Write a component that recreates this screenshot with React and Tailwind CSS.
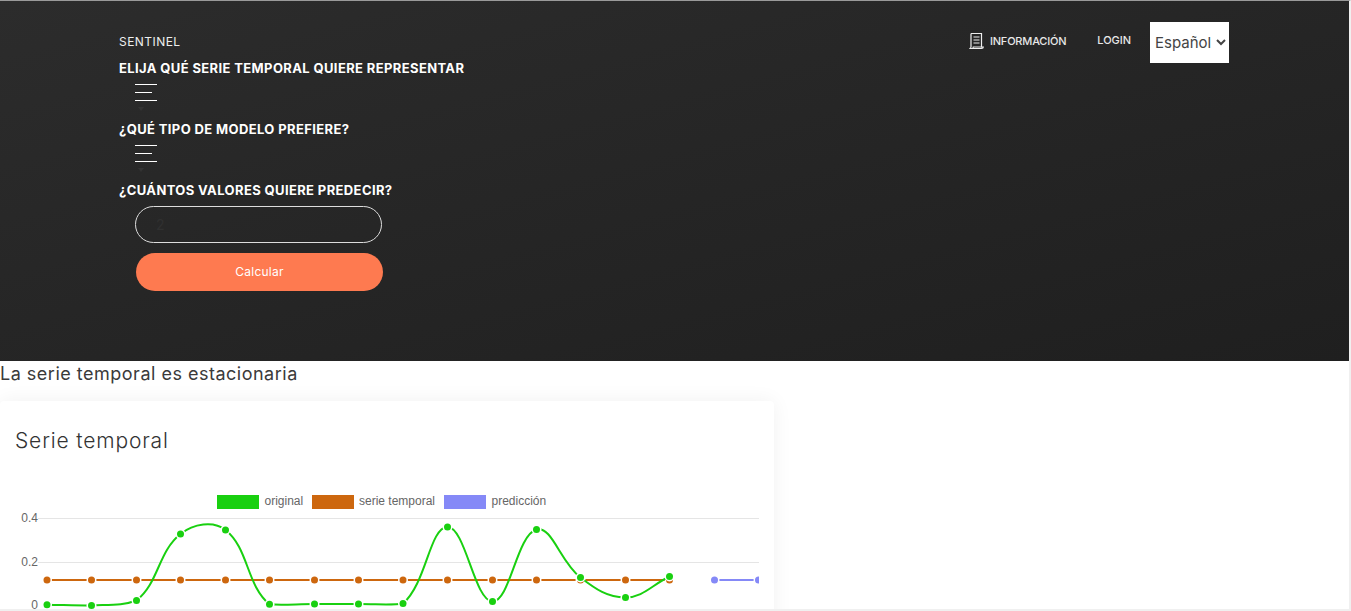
import React from "react";

const font = "[font-family:Inter,'Open_Sans',sans-serif]";

const xs = [47, 91.5, 136.5, 180.5, 225.5, 269.5, 314.5, 358.5, 403, 447.5, 492.5, 536.5, 580.5, 625.5, 669.5];
const greenY = [604.7, 605.5, 600.5, 534, 530, 604.3, 604, 604, 603.5, 527, 601.5, 529.5, 577.5, 597.5, 576.5];

// same spline as chart.js with tension 0.4, control points capped to the plot bottom
function splinePath(pts, t = 0.4, maxY = 605.5) {
  const cap = (y) => Math.min(y, maxY);
  const cps = pts.map((p, i) => {
    const prev = pts[i - 1] || p;
    const next = pts[i + 1] || p;
    const d01 = Math.hypot(p[0] - prev[0], p[1] - prev[1]);
    const d12 = Math.hypot(next[0] - p[0], next[1] - p[1]);
    const total = d01 + d12 || 1;
    const fa = (t * d01) / total;
    const fb = (t * d12) / total;
    return {
      prev: [p[0] - fa * (next[0] - prev[0]), cap(p[1] - fa * (next[1] - prev[1]))],
      next: [p[0] + fb * (next[0] - prev[0]), cap(p[1] + fb * (next[1] - prev[1]))],
    };
  });
  let d = `M${pts[0][0]} ${pts[0][1]}`;
  for (let i = 1; i < pts.length; i++) {
    d += ` C${cps[i - 1].next[0]} ${cps[i - 1].next[1]} ${cps[i].prev[0]} ${cps[i].prev[1]} ${pts[i][0]} ${pts[i][1]}`;
  }
  return d;
}

function Dots({ points, color }) {
  return points.map((p, i) => (
    <g key={i}>
      <circle cx={p[0]} cy={p[1]} r="5" fill="#fff" />
      <circle cx={p[0]} cy={p[1]} r="3.5" fill={color} />
    </g>
  ));
}

function Chart() {
  const green = xs.map((x, i) => [x, greenY[i]]);
  const orange = xs.map((x) => [x, 580]);
  const blue = [[714.5, 580], [758.5, 580]];
  return (
    <svg width="775" height="130" viewBox="0 480 775 130" className="block [font-family:'Liberation_Sans',Arial,sans-serif]">
      <defs>
        <clipPath id="plot">
          <rect x="0" y="480" width="759" height="130" />
        </clipPath>
      </defs>
      <rect x="217" y="495" width="42" height="14" fill="#19d010" />
      <text x="264.5" y="505" fontSize="12" fill="#666">original</text>
      <rect x="312" y="495" width="42" height="14" fill="#cd670e" />
      <text x="359" y="505" fontSize="12" fill="#666">serie temporal</text>
      <rect x="444" y="495" width="42" height="14" fill="#8589f7" />
      <text x="491.5" y="505" fontSize="12" fill="#666">predicción</text>

      <text x="38" y="521.5" fontSize="12" fill="#666" textAnchor="end">0.4</text>
      <text x="38" y="565.5" fontSize="12" fill="#666" textAnchor="end">0.2</text>
      <text x="38" y="609" fontSize="12" fill="#666" textAnchor="end">0</text>
      <line x1="38" x2="759" y1="518.5" y2="518.5" stroke="#e5e5e5" />
      <line x1="38" x2="759" y1="562.5" y2="562.5" stroke="#e5e5e5" />

      <g clipPath="url(#plot)">
        <path d={splinePath(blue)} fill="none" stroke="#8589f7" strokeWidth="2" />
        <Dots points={blue} color="#8589f7" />
        <path d={splinePath(orange)} fill="none" stroke="#cd670e" strokeWidth="2" />
        <Dots points={orange} color="#cd670e" />
        <path d={splinePath(green)} fill="none" stroke="#19d010" strokeWidth="2" />
        <Dots points={green} color="#19d010" />
      </g>
    </svg>
  );
}

function Hamburger() {
  return (
    <div className="ml-4 mt-2">
      <div className="flex h-[17px] w-[22px] flex-col justify-between">
        <span className="h-px w-[22px] bg-white" />
        <span className="h-px w-[17px] bg-white" />
        <span className="h-px w-[22px] bg-white" />
      </div>
      <svg width="6" height="4" viewBox="0 0 6 4" className="ml-[3px] mt-[6px] block">
        <path d="M0 0h6L3 4z" fill="#333" />
      </svg>
    </div>
  );
}

function Label({ children, className = "" }) {
  return (
    <h5 className={`text-[13px] font-bold leading-4 tracking-[0.38px] text-white ${className}`}>{children}</h5>
  );
}

export default function App() {
  return (
    <div className={`h-[611px] overflow-hidden border-t border-r-2 border-b-2 border-t-[#9a9a9a] border-r-[#f0f0f0] border-b-[#f0f0f0] bg-white ${font}`}>
      <header className="h-[360px] bg-gradient-to-br from-[#2c2c2c] to-[#1f1f1f] pl-[119px] pr-[120px]">
        <nav className="flex h-[59px] items-start justify-between pt-[21px]">
          <span className="mt-[12px] text-xs leading-4 tracking-[0.45px] text-[#eeeeee]">SENTINEL</span>
          <div className="flex items-start">
            <a className="mt-[10px] flex items-center gap-[6px] text-[11px] font-medium leading-4 tracking-[-0.2px] text-[#e8e8e8]">
              <svg width="16" height="18" viewBox="0 0 16 18" fill="none" stroke="#eee" strokeWidth="1.2">
                <path d="M3 1.5h10.5v14" />
                <path d="M3 1.5v13.5c0 1 -.8 1.5 -1.7 1.5h12.2c1 0 1.8 -.5 1.8 -1.5h-10c0 .8 -.6 1.5 -1.3 1.5" />
                <path d="M5.5 5h6M5.5 8h6M5.5 11h6" />
              </svg>
              INFORMACIÓN
            </a>
            <a className="ml-[31px] mt-[10px] text-[11px] font-medium leading-4 tracking-[-0.05px] text-[#e8e8e8]">LOGIN</a>
            <select className="ml-[19px] h-[41px] w-[79px] bg-white pl-[1px] text-[15px] text-[#444]" defaultValue="es">
              <option value="es">Español</option>
            </select>
          </div>
        </nav>
        <Label>ELIJA QUÉ SERIE TEMPORAL QUIERE REPRESENTAR</Label>
        <Hamburger />
        <Label className="mt-[10px]">¿QUÉ TIPO DE MODELO PREFIERE?</Label>
        <Hamburger />
        <Label className="mt-[10px]">¿CUÁNTOS VALORES QUIERE PREDECIR?</Label>
        <input
          type="number"
          placeholder="2"
          className="ml-4 mt-2 block h-[37px] w-[247px] rounded-full border border-[#dddddd] pl-5 text-sm placeholder:text-[#303030]"
        />
        <button className="ml-[17px] mt-[10px] block h-[38px] w-[247px] rounded-full bg-[#fe7a50] text-xs tracking-[0.25px] text-white">
          Calcular
        </button>
      </header>
      <p className="text-lg leading-[25px] tracking-[0.5px] text-[#3a3a3a]">La serie temporal es estacionaria</p>
      <section className="mt-[15px] h-[240px] w-[774px] rounded-[4px] bg-white shadow-[0_0_20px_rgba(0,0,0,0.06)]">
        <h4 className="h-[79px] pl-[15px] pt-[26px] text-[21px] font-light leading-7 tracking-[0.85px] text-[#333]">Serie temporal</h4>
        <Chart />
      </section>
    </div>
  );
}
